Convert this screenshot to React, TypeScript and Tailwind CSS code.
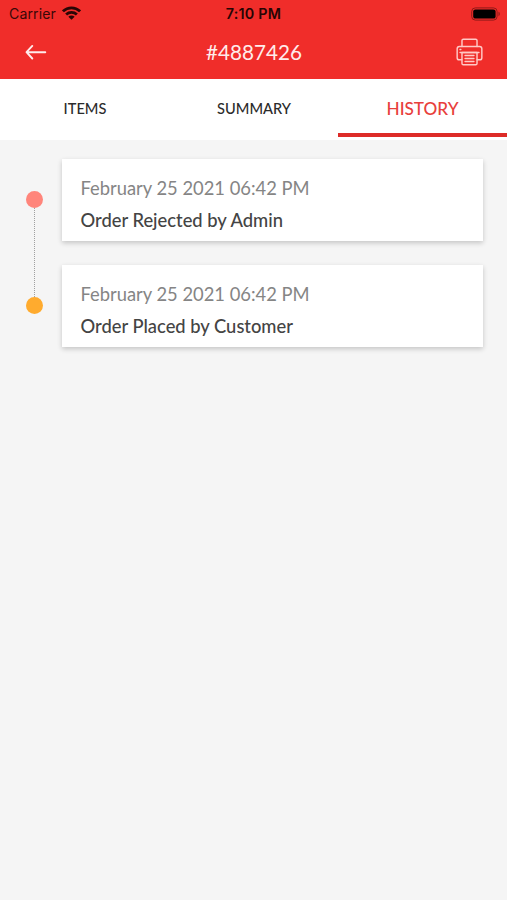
import { clsx } from "clsx";

interface HistoryEvent {
  date: string;
  title: string;
  dot: string;
}

const TABS = ["ITEMS", "SUMMARY", "HISTORY"];
const ACTIVE_TAB = "HISTORY";

const EVENTS: HistoryEvent[] = [
  { date: "February 25 2021 06:42 PM", title: "Order Rejected by Admin", dot: "bg-[#ff857b]" },
  { date: "February 25 2021 06:42 PM", title: "Order Placed by Customer", dot: "bg-[#ffab2e]" },
];

function WifiIcon() {
  return (
    <svg width="19" height="14" viewBox="0 0 18 14" preserveAspectRatio="none" fill="none" stroke="#2b0605" strokeWidth="2.6">
      <path d="M0.9 5.3C5.5 0.7 12.5 0.7 17.1 5.3" />
      <path d="M3.9 8.5C6.8 5.7 11.2 5.7 14.1 8.5" />
      <path d="M6 10.8C7.7 9.2 10.3 9.2 12 10.8L9 13.8Z" fill="#2b0605" stroke="none" />
    </svg>
  );
}

function BatteryIcon() {
  return (
    <svg width="30" height="14" viewBox="0 0 30 14">
      <rect x="0.7" y="0.9" width="25.4" height="12.2" rx="3.6" fill="none" stroke="#8f1a18" />
      <rect x="2.2" y="2.4" width="22.4" height="9.2" rx="2.2" fill="#000" />
      <path d="M27.5 4.8C29.2 5.4 29.2 8.6 27.5 9.2Z" fill="#8f1a18" />
    </svg>
  );
}

function BackIcon() {
  return (
    <svg width="22" height="16" viewBox="0 0 22 16" fill="none" stroke="#ffeceb" strokeWidth="1.9" strokeLinecap="round" strokeLinejoin="round">
      <path d="M20.3 8.2H1.8M7.3 1.9L1.5 8.2L7.3 14.5" />
    </svg>
  );
}

function PrinterIcon() {
  return (
    <svg width="27" height="28" viewBox="0 0 28 28" preserveAspectRatio="none" fill="none" stroke="#ffc9c6" strokeWidth="1.5" strokeLinejoin="round" strokeLinecap="round">
      <path d="M6.2 8.4V2.6C6.2 1.8 6.8 1.2 7.6 1.2H20.4C21.2 1.2 21.8 1.8 21.8 2.6V8.4" />
      <path d="M6 21.8H3.3C2.1 21.8 1.2 20.9 1.2 19.7V10.8C1.2 9.5 2.2 8.5 3.5 8.5H24.5C25.8 8.5 26.8 9.5 26.8 10.8V19.7C26.8 20.9 25.9 21.8 24.7 21.8H22" />
      <path d="M6.2 14.5H21.8V25.4C21.8 26.2 21.2 26.8 20.4 26.8H7.6C6.8 26.8 6.2 26.2 6.2 25.4Z" />
      <path d="M4.2 14.5H23.8M9.4 17.5H18.6M9.4 20.5H18.6M9.4 23.5H18.6" />
      <path d="M4.2 11.5H5" />
    </svg>
  );
}

function StatusBar() {
  return (
    <div className="grid h-[27px] grid-cols-3 items-center font-['Inter',sans-serif] text-[#3a0807]">
      <div className="flex items-center gap-[6px] pl-[9px]">
        <span className="text-[14.1px] tracking-[0.1px]">Carrier</span>
        <WifiIcon />
      </div>
      <span className="text-center text-[14.3px] font-semibold tracking-[0.25px] text-[#260504]">7:10 PM</span>
      <div className="flex justify-end pr-[6px]">
        <BatteryIcon />
      </div>
    </div>
  );
}

function Header() {
  return (
    <header className="h-[79px] bg-[#f02d2a]">
      <StatusBar />
      <div className="grid h-[50px] grid-cols-3 items-center pl-[25px] pr-6">
        <button type="button" aria-label="Back" className="w-fit">
          <BackIcon />
        </button>
        <h1 className="pt-0.5 text-center text-[20.7px] text-[#ffeceb]">#4887426</h1>
        <button type="button" aria-label="Print" className="justify-self-end">
          <PrinterIcon />
        </button>
      </div>
    </header>
  );
}

function Tabs() {
  return (
    <nav className="grid h-[61px] grid-cols-3 bg-white">
      {TABS.map((tab) => {
        const active = tab === ACTIVE_TAB;
        return (
          <button key={tab} type="button" className="flex flex-col pb-[3px]">
            <span
              className={clsx(
                "flex w-full flex-1 items-center justify-center",
                active ? "pt-1.5 text-[17.2px] font-medium text-[#e8403c]" : "pt-1.5 pl-px text-[14.6px] font-medium text-[#2b2b2b]",
              )}
            >
              {tab}
            </span>
            <span className={clsx("h-1 w-full", active && "bg-[#dd2b28]")} />
          </button>
        );
      })}
    </nav>
  );
}

function TimelineItem({ event, last }: { event: HistoryEvent; last: boolean }) {
  return (
    <li className="flex">
      <div className="flex w-[17px] flex-col items-center">
        {/* Rail runs from under this dot to the next one */}
        <div className={clsx("mt-8 size-[17px] shrink-0 rounded-full", event.dot)} />
        {!last && <div className="-mb-8 flex-1 border-l border-dotted border-[#a0a0a0]" />}
      </div>
      <div className={clsx("ml-[19px] flex-1", !last && "pb-[24.7px]")}>
        <div className="h-[81.5px] bg-white pl-[18.5px] pt-[17px] shadow-[0_2px_5px_rgba(0,0,0,0.2)]">
          <p className="text-[18.35px] leading-6 text-[#858585]">{event.date}</p>
          <p className="mt-2 text-[18.35px] leading-6 font-medium text-[#444]">{event.title}</p>
        </div>
      </div>
    </li>
  );
}

export default function App() {
  return (
    <div className="h-[900px] w-[507px] overflow-hidden bg-[#f5f5f5] font-['Lato',sans-serif]">
      <Header />
      <Tabs />
      <ul className="pl-[26px] pr-[24.5px] pt-[19px]">
        {EVENTS.map((event, i) => (
          <TimelineItem key={event.title} event={event} last={i === EVENTS.length - 1} />
        ))}
      </ul>
    </div>
  );
}
